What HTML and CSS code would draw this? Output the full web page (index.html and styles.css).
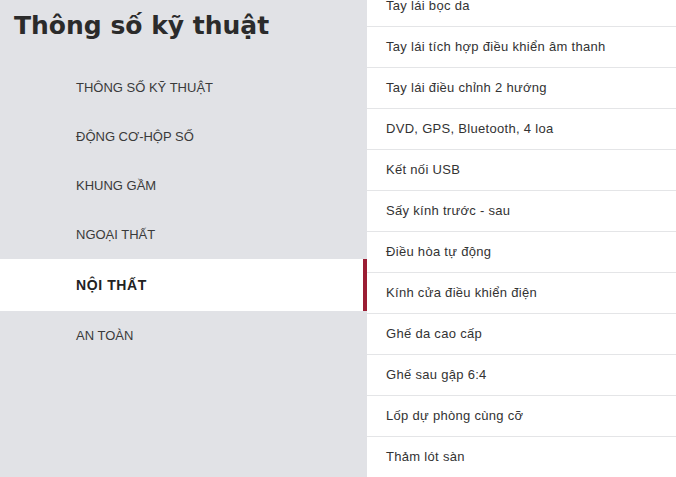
FILE: index.html
```
<!DOCTYPE html>
<html lang="vi">
<head>
	<meta charset="UTF-8">
	<title>Thông số kỹ thuật</title>
	<link rel="stylesheet" href="styles.css">
</head>
<body>
	<div class="specs">
		<div class="specs-side">
			<h1 class="specs-title">Thông số kỹ thuật</h1>
			<ul class="tabs">
				<li class="tab">THÔNG SỐ KỸ THUẬT</li>
				<li class="tab">ĐỘNG CƠ-HỘP SỐ</li>
				<li class="tab">KHUNG GẦM</li>
				<li class="tab">NGOẠI THẤT</li>
				<li class="tab active">NỘI THẤT</li>
				<li class="tab">AN TOÀN</li>
			</ul>
		</div>
		<div class="specs-body">
			<ul class="spec-list">
				<li>Tay lái bọc da</li>
				<li>Tay lái tích hợp điều khiển âm thanh</li>
				<li>Tay lái điều chỉnh 2 hướng</li>
				<li>DVD, GPS, Bluetooth, 4 loa</li>
				<li>Kết nối USB</li>
				<li>Sấy kính trước - sau</li>
				<li>Điều hòa tự động</li>
				<li>Kính cửa điều khiển điện</li>
				<li>Ghế da cao cấp</li>
				<li>Ghế sau gập 6:4</li>
				<li>Lốp dự phòng cùng cỡ</li>
				<li>Thảm lót sàn</li>
			</ul>
		</div>
	</div>
</body>
</html>
```

FILE: styles.css
```
*{
	box-sizing: border-box;
}
body{
	margin: 0;
	font-family: "Liberation Sans", Arial, sans-serif;
	font-size: 13px;
	color: #333;
	background-color: #fff;
	overflow: hidden;
}
ul{
	list-style: none;
	margin: 0;
	padding: 0;
}
.specs{
	display: flex;
	height: 477px;
	overflow: hidden;
}
.specs-side{
	width: 367px;
	flex-shrink: 0;
	background-color: #e1e2e6;
}
.specs-title{
	margin: 0;
	height: 63px;
	padding: 11px 14px 0;
	font-family: "DejaVu Sans", Verdana, sans-serif;
	font-size: 25px;
	line-height: 30px;
	font-weight: bold;
	color: #2b2b2b;
	white-space: nowrap;
}
.tab{
	height: 49px;
	line-height: 49px;
	padding-left: 76px;
	color: #3a3a3a;
}
.tab.active{
	height: 52px;
	line-height: 52px;
	background-color: #fff;
	border-right: 4px solid #9b1d33;
	font-size: 14px;
	font-weight: bold;
	letter-spacing: 0.6px;
	color: #222;
}
.specs-body{
	flex: 1;
	background-color: #fff;
}
.spec-list{
	margin-top: -14px;
}
.spec-list li{
	height: 41px;
	line-height: 40px;
	padding-left: 19px;
	border-bottom: 1px solid #e4e5e7;
	letter-spacing: 0.3px;
	color: #333;
}
```
